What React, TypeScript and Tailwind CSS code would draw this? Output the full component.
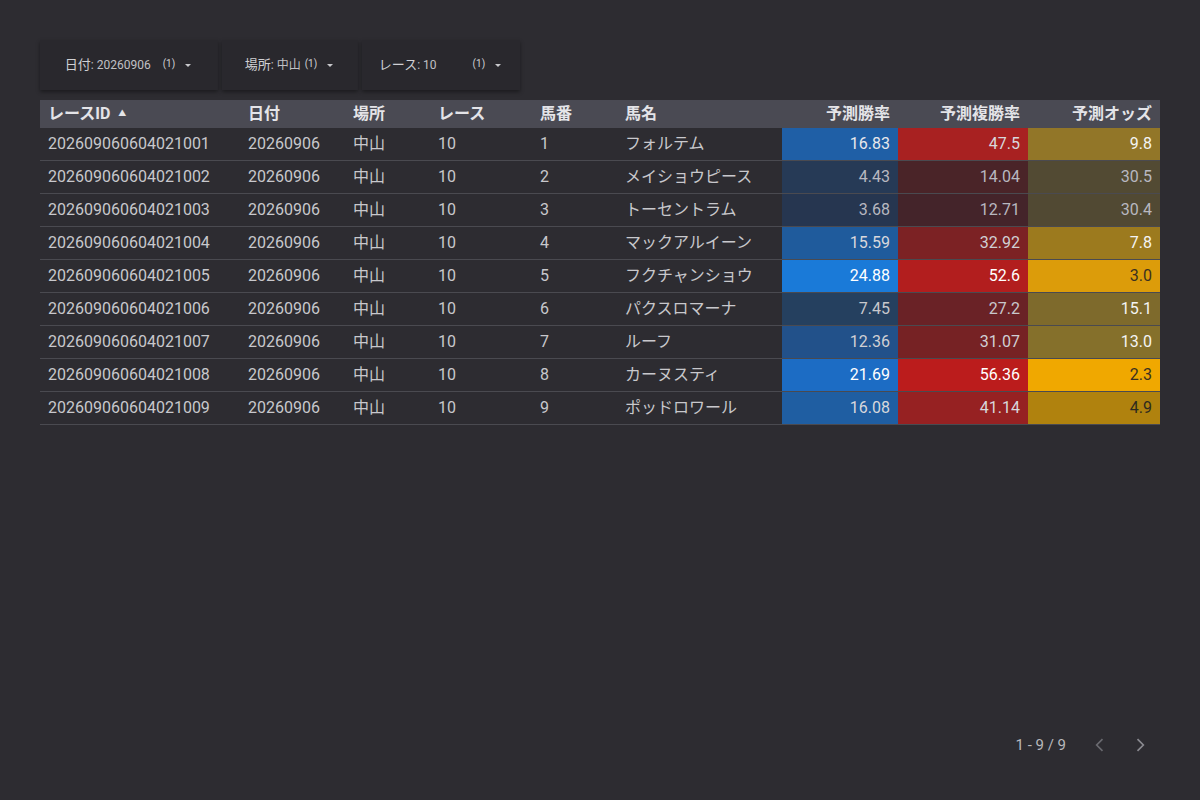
import React from "react";

const rows: [string, string, string, string, string, string, string, string, string, string, string, string, string, string][] = [
  ["1","フォルテム","16.83","#1f5fa6","#e8e8ec","47.5","#a82121","#d8d8dc","9.8","#927628","#f4f4f4"],
  ["2","メイショウピース","4.43","#263a56","#b8b8c0","14.04","#4a2428","#b8b8c0","30.5","#524a33","#b8b8c0"],
  ["3","トーセントラム","3.68","#263650","#b8b8c0","12.71","#44242a","#b8b8c0","30.4","#514933","#b8b8c0"],
  ["4","マックアルイーン","15.59","#1f5b9c","#d8d8dc","32.92","#7c2224","#d0d0d4","7.8","#9c7a1e","#f4f4f4"],
  ["5","フクチャンショウ","24.88","#1a7ad8","#ffffff","52.6","#b21e1e","#ffffff","3.0","#dc9c0a","#3a3020"],
  ["6","パクスロマーナ","7.45","#25405f","#c8c8cc","27.2","#6a2226","#c8c8cc","15.1","#7e6a2c","#f4f4f4"],
  ["7","ルーフ","12.36","#22518a","#d0d0d4","31.07","#762224","#d0d0d4","13.0","#85702b","#f4f4f4"],
  ["8","カーヌスティ","21.69","#1c6cc4","#ffffff","56.36","#bb1c1c","#ffffff","2.3","#f0a800","#3a3020"],
  ["9","ポッドロワール","16.08","#1f5ea2","#d8d8dc","41.14","#962122","#d8d8dc","4.9","#b0820e","#2d2a1f"],
] as any;

const Caret = () => (
  <svg width="10" height="10" viewBox="0 0 10 10" className="ml-2"><path d="M2 4h6L5 7z" fill="#c8c8cc" /></svg>
);

export default function App() {
  return (
    <div className="w-[1200px] h-[800px] bg-[#2d2c31] text-[#d4d4d8] flex flex-col" style={{ fontFamily: "Roboto, 'Noto Sans CJK JP', sans-serif" }}>
      <div className="flex gap-1 pl-10 pt-10">
        {[["日付", ": 20260906", "w-[178px]", "ml-3"], ["場所", ": 中山", "w-[136px]", "ml-1"], ["レース", ": 10", "w-[158px]", "ml-9"]].map(([l, v, w, m]) => (
          <div key={l} className={`${w} h-[50px] bg-[#29282d] shadow-[0_2px_4px_rgba(0,0,0,0.4)] flex items-center justify-center text-[13px] text-[#d0d0d4]`}>
            <span>{l}</span><span className="text-[12px] text-[#c0c0c4]">{v}</span>
            <span className={`${m} text-[10px] relative -top-[2px]`}>(1)</span><Caret />
          </div>
        ))}
      </div>
      <div className="mx-10 mt-[10px] text-[16px]">
        <div className="flex h-[28px] bg-[#4a4a53] items-center font-bold text-[#e4e4e8]">
          <div className="w-[200px] pl-2 flex items-center">レースID<span className="text-[8px] ml-2">▲</span></div>
          <div className="w-[105px] pl-2">日付</div>
          <div className="w-[85px] pl-2">場所</div>
          <div className="w-[102px] pl-2">レース</div>
          <div className="w-[85px] pl-2">馬番</div>
          <div className="w-[165px] pl-2">馬名</div>
          <div className="w-[116px] pr-2 text-right">予測勝率</div>
          <div className="w-[130px] pr-2 text-right">予測複勝率</div>
          <div className="w-[132px] pr-2 text-right">予測オッズ</div>
        </div>
        {rows.map((r: any) => (
          <div key={r[0]} className="flex h-[33px] items-stretch border-b border-[#4a4a50] text-[#c8c8cc]">
            <div className="w-[200px] pl-2 flex items-center">2026090606040210{r[0].padStart(2, "0")}</div>
            <div className="w-[105px] pl-2 flex items-center">20260906</div>
            <div className="w-[85px] pl-2 flex items-center">中山</div>
            <div className="w-[102px] pl-2 flex items-center">10</div>
            <div className="w-[85px] pl-2 flex items-center">{r[0]}</div>
            <div className="w-[165px] pl-2 flex items-center">{r[1]}</div>
            <div className="w-[116px] pr-2 flex items-center justify-end" style={{ background: r[3], color: r[4] }}>{r[2]}</div>
            <div className="w-[130px] pr-2 flex items-center justify-end" style={{ background: r[6], color: r[7] }}>{r[5]}</div>
            <div className="w-[132px] pr-2 flex items-center justify-end" style={{ background: r[9], color: r[10] }}>{r[8]}</div>
          </div>
        ))}
      </div>
      <div className="flex-1" />
      <div className="flex items-center justify-end pr-[50px] pb-[44px] text-[15px] text-[#b8b8bc]">
        <span>1 - 9 / 9</span>
        <svg width="20" height="20" viewBox="0 0 24 24" className="ml-6" fill="none" stroke="#6a6a70" strokeWidth="2"><path d="M15 5l-7 7 7 7" /></svg>
        <svg width="20" height="20" viewBox="0 0 24 24" className="ml-5" fill="none" stroke="#8a8a90" strokeWidth="2"><path d="M9 5l7 7-7 7" /></svg>
      </div>
    </div>
  );
}
